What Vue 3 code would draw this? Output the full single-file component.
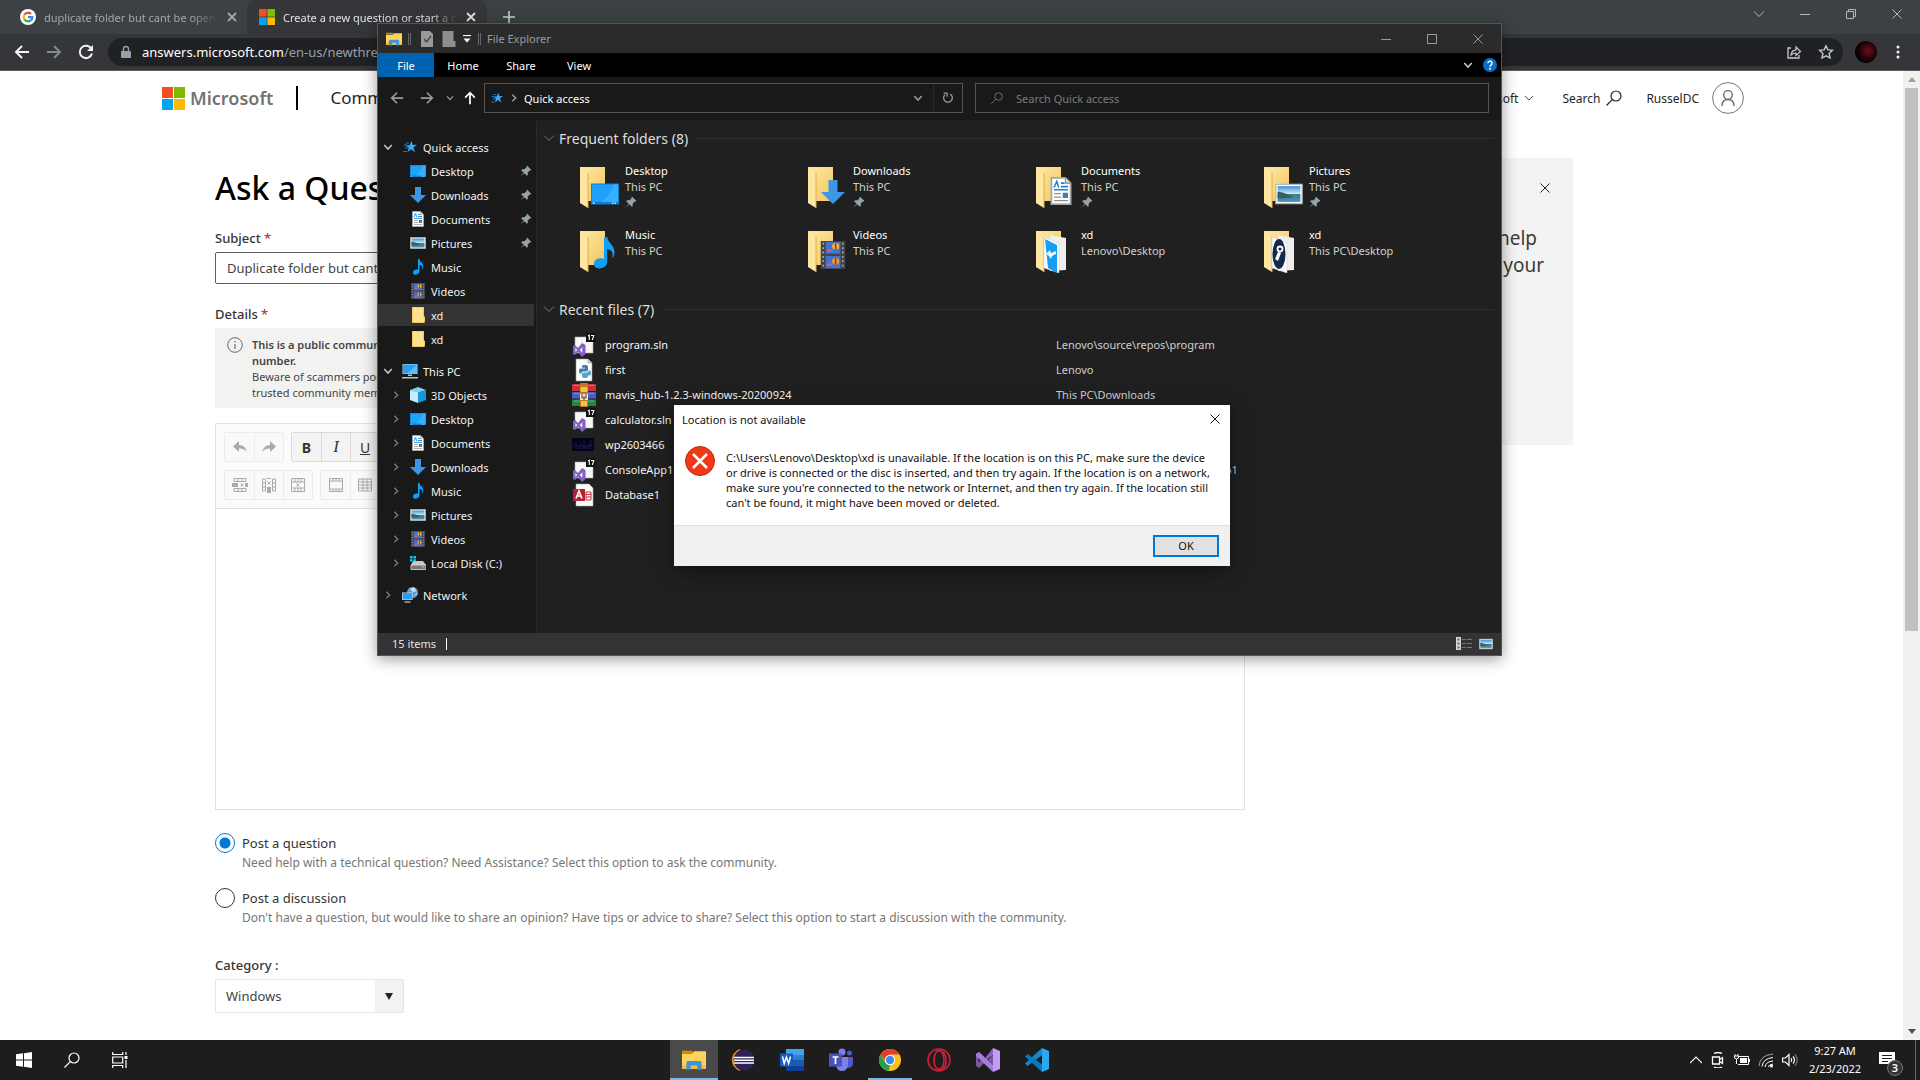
<script setup>
import { ref } from 'vue'

const subject = ref('Duplicate folder but cant be opened')
const postType = ref('question')
const category = ref('Windows')

const quickAccess = [
  { name: 'Desktop', icon: 'desktop', pinned: true },
  { name: 'Downloads', icon: 'download', pinned: true },
  { name: 'Documents', icon: 'document', pinned: true },
  { name: 'Pictures', icon: 'picture', pinned: true },
  { name: 'Music', icon: 'music' },
  { name: 'Videos', icon: 'video' },
  { name: 'xd', icon: 'folder', selected: true },
  { name: 'xd', icon: 'folder' }
]

const thisPc = [
  { name: '3D Objects', icon: 'cube' },
  { name: 'Desktop', icon: 'desktop' },
  { name: 'Documents', icon: 'document' },
  { name: 'Downloads', icon: 'download' },
  { name: 'Music', icon: 'music' },
  { name: 'Pictures', icon: 'picture' },
  { name: 'Videos', icon: 'video' },
  { name: 'Local Disk (C:)', icon: 'disk' }
]

const folders = [
  { name: 'Desktop', path: 'This PC', icon: 'desktop', pinned: true },
  { name: 'Downloads', path: 'This PC', icon: 'download', pinned: true },
  { name: 'Documents', path: 'This PC', icon: 'document', pinned: true },
  { name: 'Pictures', path: 'This PC', icon: 'picture', pinned: true },
  { name: 'Music', path: 'This PC', icon: 'music' },
  { name: 'Videos', path: 'This PC', icon: 'video' },
  { name: 'xd', path: 'Lenovo\\Desktop', sheet: 'blue' },
  { name: 'xd', path: 'This PC\\Desktop', sheet: 'navy' }
]

const files = [
  { name: 'program.sln', path: 'Lenovo\\source\\repos\\program', icon: 'sln' },
  { name: 'first', path: 'Lenovo', icon: 'python' },
  { name: 'mavis_hub-1.2.3-windows-20200924', path: 'This PC\\Downloads', icon: 'rar' },
  { name: 'calculator.sln', path: '', icon: 'sln' },
  { name: 'wp2603466', path: '', icon: 'wallpaper' },
  { name: 'ConsoleApp1', path: 'Lenovo\\source\\repos\\ConsoleApp1', icon: 'sln' },
  { name: 'Database1', path: '', icon: 'access' }
]

const apps = [
  { name: 'File Explorer', icon: 'explorer', state: 'active' },
  { name: 'Eclipse', icon: 'eclipse' },
  { name: 'Word', icon: 'word' },
  { name: 'Teams', icon: 'teams' },
  { name: 'Chrome', icon: 'chrome', state: 'open' },
  { name: 'Opera', icon: 'opera' },
  { name: 'Visual Studio', icon: 'vs' },
  { name: 'Visual Studio Code', icon: 'vscode' }
]
</script>

<template>
  <div class="screen">
    <svg class="sprite" aria-hidden="true">
      <defs>
        <linearGradient id="gold" x1="0" y1="0" x2="1" y2="1">
          <stop offset="0" stop-color="#ffe9a6" /><stop offset="1" stop-color="#f0c75e" />
        </linearGradient>
        <linearGradient id="sky" x1="0" y1="0" x2="0" y2="1">
          <stop offset="0" stop-color="#3f8fd6" /><stop offset=".5" stop-color="#d5eefb" /><stop offset=".52" stop-color="#3f7f7c" /><stop offset="1" stop-color="#4d8fbd" />
        </linearGradient>
      </defs>
      <symbol id="close" viewBox="0 0 12 12"><path d="M1.5 1.5l9 9M10.500 1.500l-9 9" fill="none" stroke="currentColor" /></symbol>
      <symbol id="close-bold" viewBox="0 0 12 12"><path d="M2 2l8 8M10 2l-8 8" fill="none" stroke="currentColor" stroke-width="1.800" /></symbol>
      <symbol id="plus" viewBox="0 0 12 12"><path d="M6 0v12M0 6h12" fill="none" stroke="currentColor" stroke-width="1.600" /></symbol>
      <symbol id="minimize" viewBox="0 0 12 12"><path d="M1 6.500h10" stroke="currentColor" /></symbol>
      <symbol id="maximize" viewBox="0 0 12 12"><path d="M1.500 1.500h9v9h-9z" fill="none" stroke="currentColor" /></symbol>
      <symbol id="restore" viewBox="0 0 12 12"><path d="M1.500 3.500h7v7h-7zM3.500 3V1.500h7v7H9" fill="none" stroke="currentColor" /></symbol>
      <symbol id="chev-down" viewBox="0 0 12 12"><path d="M1.500 3.500L6 8.500l4.500-5" fill="none" stroke="currentColor" stroke-width="1.800" /></symbol>
      <symbol id="chev-thin" viewBox="0 0 12 12"><path d="M1 3.500l5 5 5-5" fill="none" stroke="currentColor" /></symbol>
      <symbol id="chev-up" viewBox="0 0 12 12"><path d="M0 9l6-6 6 6" fill="none" stroke="currentColor" stroke-width="1.200" /></symbol>
      <symbol id="chev-right" viewBox="0 0 12 12"><path d="M4 2l4 4-4 4" fill="none" stroke="currentColor" stroke-width="1.800" /></symbol>
      <symbol id="arrow-left" viewBox="0 0 16 16"><path d="M15 8H2M8 2L2 8l6 6" fill="none" stroke="currentColor" stroke-width="2" /></symbol>
      <symbol id="arrow-right" viewBox="0 0 16 16"><path d="M1 8h13M8 2l6 6-6 6" fill="none" stroke="currentColor" stroke-width="2" /></symbol>
      <symbol id="arrow-up" viewBox="0 0 16 16"><path d="M8 15V2M2.500 7.500L8 2l5.500 5.500" fill="none" stroke="currentColor" stroke-width="2" /></symbol>
      <symbol id="reload" viewBox="0 0 16 16"><path d="M13.500 5A6.200 6.200 0 1 0 14 9.500" fill="none" stroke="currentColor" stroke-width="2" /><path d="M15 1v6H9z" fill="currentColor" /></symbol>
      <symbol id="refresh" viewBox="0 0 16 16"><path d="M10.500 3.500A5 5 0 1 1 4.500 4.200M3 2.500h4v4" fill="none" stroke="currentColor" stroke-width="1.500" /></symbol>
      <symbol id="lock" viewBox="0 0 12 14"><path d="M2 6h8a1 1 0 0 1 1 1v5a1 1 0 0 1-1 1H2a1 1 0 0 1-1-1V7a1 1 0 0 1 1-1z" fill="currentColor" /><path d="M3.500 6V4a2.500 2.500 0 0 1 5 0v2" fill="none" stroke="currentColor" stroke-width="1.400" /></symbol>
      <symbol id="share" viewBox="0 0 16 16"><path d="M5 4H2v10h11v-3" fill="none" stroke="currentColor" stroke-width="1.300" /><path d="M5 11c.5-3.500 2.500-5 5-5.200V3l4.500 4.500L10 11.500V9C8 9 6.500 9.500 5 11z" fill="none" stroke="currentColor" stroke-width="1.200" /></symbol>
      <symbol id="star-line" viewBox="0 0 16 16"><path d="M8 1.800l1.900 4.100 4.500.5-3.300 3.100.9 4.500L8 11.800 4 14l.9-4.500L1.600 6.400l4.500-.5z" fill="none" stroke="currentColor" stroke-width="1.400" /></symbol>
      <symbol id="dots" viewBox="0 0 4 16"><circle cx="2" cy="3" r="1.500" fill="currentColor" /><circle cx="2" cy="8" r="1.500" fill="currentColor" /><circle cx="2" cy="13" r="1.500" fill="currentColor" /></symbol>
      <symbol id="magnifier" viewBox="0 0 16 16"><circle cx="10" cy="6" r="5" fill="none" stroke="currentColor" stroke-width="1.200" /><path d="M6.300 9.700L.5 15.500" stroke="currentColor" stroke-width="1.200" /></symbol>
      <symbol id="google" viewBox="0 0 16 16"><circle cx="8" cy="8" r="8" fill="#fff" /><g fill="none" stroke-width="2.200"><path d="M4.400 5.700A4.300 4.300 0 0 1 11 4.900" stroke="#ea4335" /><path d="M4.400 5.700a4.300 4.300 0 0 0 0 4.600" stroke="#fbbc05" /><path d="M4.400 10.300a4.300 4.300 0 0 0 6.200 1.200" stroke="#34a853" /><path d="M8 8.200h4.300a4.300 4.300 0 0 1-1.700 3.300" stroke="#4285f4" /></g></symbol>
      <symbol id="mslogo" viewBox="0 0 23 23"><path fill="#f25022" d="M0 0h11v11H0z" /><path fill="#7fba00" d="M12 0h11v11H12z" /><path fill="#00a4ef" d="M0 12h11v11H0z" /><path fill="#ffb900" d="M12 12h11v11H12z" /></symbol>
      <symbol id="person" viewBox="0 0 32 32"><circle cx="16" cy="16" r="15.400" fill="#fff" stroke="#777" /><circle cx="16" cy="13" r="4.300" fill="none" stroke="#666" stroke-width="1.300" /><path d="M10 24c0-4 2-6.500 6-6.500s6 2.500 6 6.500" fill="none" stroke="#666" stroke-width="1.300" /></symbol>
      <symbol id="explorer" viewBox="0 0 22 20"><path d="M0 1.500h9l2 2H0z" fill="#d88c00" /><path d="M0 4h9.500l1.500-2h11v16H0z" fill="#ffd35c" /><path d="M0 15h22v3H0z" fill="#f5bd3b" /><path d="M4 19v-6.500q0-1.500 1.500-1.500h11q1.500 0 1.500 1.500V19h-4v-4H8v4z" fill="#3f93dc" /></symbol>
      <symbol id="doc-check" viewBox="0 0 12 16"><path d="M0 0h9l3 3v13H0z" fill="#9a9a9a" /><path d="M3 8l2.500 3L10 5" fill="none" stroke="#444" stroke-width="1.300" /></symbol>
      <symbol id="doc-blank" viewBox="0 0 13 16"><path d="M0 0h11v10h2v6H0z" fill="#8f8e8b" /></symbol>
      <symbol id="qat" viewBox="0 0 8 8"><path d="M0 .5h8" stroke="#fff" stroke-width="1.200" /><path d="M.5 3.500h7L4 7.500z" fill="#fff" /></symbol>
      <symbol id="help" viewBox="0 0 16 16"><circle cx="8" cy="8" r="8" fill="#0a6fc9" /><path d="M5.600 6a2.400 2.300 0 1 1 3.500 2C8.200 8.500 8 9 8 9.900" fill="none" stroke="#fff" stroke-width="1.600" /><circle cx="8" cy="12.200" r="1.100" fill="#fff" /></symbol>
      <symbol id="qstar" viewBox="0 0 16 16"><path d="M9.500 2l1.300 4 4.200-.2-3.600 2.600 1.500 4.900-3.700-3-3.700 2.800 1.300-4.400-3.200-2.300 4.100-.2z" fill="#38a9ff" /><path d="M4 4h3M2 6.200h3M3 9h3M1 12.500h4" stroke="#1378cc" stroke-width="1.200" /></symbol>
      <symbol id="desktop" viewBox="0 0 16 16"><path d="M0 2h16v12H0z" fill="#0f7fd8" /><path d="M.6 2.600h14.800v9.900H.6z" fill="#1ea2fb" /><path d="M6 12.500c3-2 6-6 7-9.900h2.400v9.900z" fill="#36b0ff" /><path d="M1 13.200h1M12 13.200h.8M13.400 13.200h.8" stroke="#fff" stroke-width=".7" /></symbol>
      <symbol id="download" viewBox="0 0 16 16"><path d="M5 0h6v8h5l-8 8-8-8h5z" fill="#3d95e5" /></symbol>
      <symbol id="document" viewBox="0 0 16 16"><path d="M2.500.5h8l3 3v12h-11z" fill="#fff" stroke="#a5a5a5" /><path d="M10.500.5v3h3" fill="#ddd" stroke="#888" stroke-width=".6" /><path d="M4 6l1.600-3.500L6.700 6M8 3.500h2M8 5.500h4M4 7.300h8" fill="none" stroke="#1585d8" stroke-width=".9" /><path d="M4 9.500h4M4 11.500h4M4 13.500h8" stroke="#8f8f8f" stroke-width=".7" /><path d="M9 9h3v3H9z" fill="#3b7fb3" /></symbol>
      <symbol id="picture" viewBox="0 0 16 16"><path d="M.5 2.500h15v11H.5z" fill="#fff" stroke="#b9b9b9" stroke-width=".7" /><path d="M1.500 3.500h13v9h-13z" fill="url(#sky)" /><path d="M1.500 6.500c4 .8 7 1.700 9 3.500l-9 .6z" fill="#37615c" /></symbol>
      <symbol id="music" viewBox="0 0 16 16"><path d="M8 0h1.600c.3 3.500 5 4.500 3.300 9.500-.2.700-.6 1-.8.800C13 7 11 6.300 9.600 6v6.500C9.600 16 3 17.200 3 13.400c0-2.400 3-3.400 5-2.400z" fill="#0ea0f8" /></symbol>
      <symbol id="video" viewBox="0 0 16 16"><path d="M1 0h14v16H1z" fill="#454545" /><path d="M3.800.5h8.400v6.800H3.800zM3.800 8.500h8.400v7H3.800z" fill="#3f74cf" /><circle cx="9.500" cy="3" r="2" fill="#f3b62c" /><circle cx="9.500" cy="11.500" r="2" fill="#e5a02b" /><path d="M9.500 1v4M9.500 9.500v4" stroke="#ba2731" stroke-width=".9" /><path d="M4 6q2-3 4 0zM4 14q2-3 4 0z" fill="#da5a86" /><path d="M2.400 1v15M13.600 1v15" stroke="#bbb" stroke-width=".8" stroke-dasharray="1 1.500" /></symbol>
      <symbol id="folder" viewBox="0 0 16 16"><path d="M2 0h12v9.500h1V15l-1 1H2z" fill="#e9bd4b" /><path d="M2.600.6h10.800V10h1v4.500l-1 .8H2.600z" fill="#ffe08d" /></symbol>
      <symbol id="pc" viewBox="0 0 16 16"><path d="M.5 1h15v10H.5z" fill="#b9d8ef" /><path d="M1 1.500h14v9H1z" fill="#2a9df4" /><path d="M15 1.500v9H5z" fill="#5bbcff" /><path d="M6 11.500h4v1.500H6zM0 14h16v1.500H0z" fill="#b9c3ca" /></symbol>
      <symbol id="cube" viewBox="0 0 16 16"><path d="M0 3l8-3 8 3-8 3z" fill="#7fd0f2" /><path d="M0 3l8 2.500V16l-8-3z" fill="#c6edf8" /><path d="M16 3L8 5.500V16l8-3z" fill="#1696dd" /></symbol>
      <symbol id="disk" viewBox="0 0 16 16"><path d="M3 6h10l3 4H1z" fill="#c8c8c8" /><path d="M1 10h15v4.500H1z" fill="#777" stroke="#ddd" stroke-width=".8" /><path d="M12 12h2" stroke="#4ddc53" stroke-width="1.300" /><path d="M0 1h2.600v2.400H0zM3.400 1H6v2.400H3.400zM0 4.200h2.600v2.400H0zM3.400 4.200H6v2.400H3.400z" fill="#14c4ee" /></symbol>
      <symbol id="network" viewBox="0 0 16 16"><circle cx="10.500" cy="5.500" r="5.500" fill="#5e9dc9" /><path d="M7 2c3 0 2 3 5 3s2-3 0-4.700M13 9c0-2 1-3 3-3" fill="#b8e4fb" /><path d="M0 5.500h10.500v7.500H0z" fill="#c2e2f7" /><path d="M.6 6h9.300v6.400H.6z" fill="#2a9df4" /><path d="M2.500 15h6" stroke="#b9c3ca" stroke-width="1.300" /></symbol>
      <symbol id="pin" viewBox="0 0 12 12"><path d="M7 .5L11.500 5l-1 .6-.8-.2-2 2.300.1 2.300-1 .8L4.300 8.300.5 11.500 3.700 7.700 1.200 5.200l.9-1 2.300.1 2.200-2-.2-.9z" fill="#94a2ab" /></symbol>
      <symbol id="folder-open" viewBox="0 0 40 42"><path d="M0 0h25v34H0z" fill="url(#gold)" /><path d="M0 0l8 6v35l-8-5z" fill="#ffe7a1" /><path d="M8 6v35" stroke="#dfae45" /></symbol>
      <symbol id="sheet-blue" viewBox="0 0 40 42"><path d="M14 4l16 3v32l-16 1z" fill="#eee" /><path d="M8 6l15 6v30L8 37z" fill="#fafafa" stroke="#ccc" stroke-width=".5" /><path d="M9 8l12 6v28l-9-5z" fill="#169ff2" /><path d="M10 23l4-4 1 3 5-2v3l-4 2-1 3-2-3z" fill="#e9f7ff" /></symbol>
      <symbol id="sheet-navy" viewBox="0 0 40 42"><path d="M14 4l16 3v32l-16 1z" fill="#eee" /><path d="M8 6l15 6v30L8 37z" fill="#fafafa" stroke="#ccc" stroke-width=".5" /><ellipse cx="15" cy="23" rx="6.500" ry="15" fill="#14294e" /><circle cx="16" cy="18" r="3.400" fill="#fff" /><circle cx="16" cy="18" r="1.600" fill="#14294e" /><path d="M14 21l3 1-3 8-3-2z" fill="#fff" /></symbol>
      <symbol id="sln" viewBox="0 0 24 24"><path d="M3 4h18v16H3z" fill="#f7f7f7" stroke="#aaa" stroke-width=".6" /><path d="M14 0h9.500v9H14z" fill="#111" /><path d="M16 3l1.300-.8V7M19 2.500h2.800L20.300 7" fill="none" stroke="#fff" stroke-width="1.100" /><path d="M1 13l2-1 3 3 4-5 3.500 2v9L10 24l-4-5-3 3-2-1zm2.300 2v4l2-2zm7-.8L7.800 17l2.500 2.800z" fill="#8661c5" fill-rule="evenodd" /></symbol>
      <symbol id="python" viewBox="0 0 24 24"><path d="M4 1h12l4 4v18H4z" fill="#fdfdfd" stroke="#999" stroke-width=".6" /><path d="M16 1v4h4" fill="#d5d5d5" stroke="#888" stroke-width=".5" /><path d="M11 7h3q2 0 2 2v3q0 1.500-2 1.500h-3q-1.500 0-1.500 2H8q-1-.5-1-2.500t1-2.500h5v-.7h-3V9q0-2 1-2z" fill="#3f7fae" /><path d="M14 20h-2q-2 0-2-2v-2q0-1.500 2-1.500h3q1.500 0 1.500-2H18q1 .5 1 2.500t-1 2.500h-2v.7Q16 20 14 20z" fill="#55a3cc" /></symbol>
      <symbol id="rar" viewBox="0 0 24 24"><path d="M0 1h24v7H0z" fill="#c5353b" /><path d="M0 9h24v6.500H0z" fill="#4a5fc0" /><path d="M0 16.500h24V23H0z" fill="#23864a" /><path d="M2 2.500h20M2 10.500h20M2 18h20" stroke="#fff" stroke-opacity=".3" /><path d="M8 0h8v24H8z" fill="#c9771f" /><path d="M8.500 4h7v5h-7zM9 18h6v5H9z" fill="#f1c445" /><path d="M8 11h8v6H8z" fill="#f4efe2" /><path d="M10 11v4h4v-4M12 13v4" fill="none" stroke="#79522c" stroke-width="1.200" /></symbol>
      <symbol id="wallpaper" viewBox="0 0 24 24"><path d="M0 5h22v13H0z" fill="#03031c" /><path d="M1 13h20M4 9v4M9 10v3M12 8v6M17 10v3M19 7v6M5 15h13" stroke="#25255f" stroke-width=".8" /></symbol>
      <symbol id="access" viewBox="0 0 24 24"><path d="M4 1h13l4 4v18H4z" fill="#fdfdfd" stroke="#aaa" stroke-width=".6" /><path d="M14 9h5v8h-5zM14 11.500h5M14 14h5" fill="none" stroke="#bc2f3a" /><path d="M1 6h12v12H1z" fill="#b7202f" /><path d="M4 15.500l3-7.500 3 7.500M5 13h4" fill="none" stroke="#fff" stroke-width="1.600" /></symbol>
      <symbol id="eclipse" viewBox="0 0 24 24"><path d="M9 1.500A11 11 0 0 0 9 22.500 12 12 0 0 1 9 1.500z" fill="#f7941e" stroke="#f7941e" /><circle cx="13" cy="12" r="10.500" fill="#2c2255" /><path d="M3 9.500h20M3 12.200h20M3 15h20" stroke="#fff" stroke-width="1.400" /></symbol>
      <symbol id="word" viewBox="0 0 24 24"><path d="M6 1h18v6H6z" fill="#41a5ee" /><path d="M6 7h18v5.500H6z" fill="#2b7cd3" /><path d="M6 12.500h18V18H6z" fill="#185abd" /><path d="M6 18h18v5H6z" fill="#103f91" /><path d="M0 5.500h13v13H0z" fill="#185abd" /><path d="M2.500 8.500l1.700 7 2.200-6.500 2.200 6.500 1.900-7" fill="none" stroke="#fff" stroke-width="1.500" /></symbol>
      <symbol id="teams" viewBox="0 0 24 24"><circle cx="13" cy="4" r="3.500" fill="#7b83eb" /><circle cx="20.500" cy="5" r="2.500" fill="#5059c9" /><path d="M16 9h8v7q-1 4-5 4h-3z" fill="#5059c9" /><path d="M7 9h12v8q-1 6-6 6t-6-6z" fill="#7b83eb" /><path d="M0 5.500h13v13H0z" fill="#4b53bc" /><path d="M3.500 9h6M6.500 9v7" stroke="#fff" stroke-width="1.700" /></symbol>
      <symbol id="chrome" viewBox="0 0 24 24"><circle cx="12" cy="12" r="11" fill="#fbc116" /><path d="M2.500 6.500A11 11 0 0 1 21.500 6.500H12L8 14z" fill="#e33b2e" /><path d="M2.500 6.500l5 8.300L12 17l-1.500 6A11 11 0 0 1 2.500 6.500z" fill="#2a9d4e" /><circle cx="12" cy="12" r="5.200" fill="#fff" /><circle cx="12" cy="12" r="4.200" fill="#4688f1" /></symbol>
      <symbol id="opera" viewBox="0 0 24 24"><g fill="none" stroke="#cf1f3b" stroke-width="1.600"><circle cx="12" cy="12" r="11" /><ellipse cx="12" cy="12" rx="5" ry="9.500" /><path d="M10 2.800q8.500-1.300 9 9.200t-9 9.200" /></g></symbol>
      <symbol id="vs" viewBox="0 0 24 24"><path d="M0 6l3-2 14 13V7L3 20l-3-2 0-12zm2.500 3.500v5L5 12z" fill="#77599f" fill-rule="evenodd" /><path d="M10 12l7-5v-7l-7 9z" fill="#8a63c7" /><path d="M3 4l14 13v7L0 8V6z" fill="#a87ade" /><path d="M17 0l7 3v18l-7 3z" fill="#c49af4" /></symbol>
      <symbol id="vscode" viewBox="0 0 24 24"><path d="M17 0L0 15.500 2.500 18 18 6.500z" fill="#1488cf" /><path d="M2.500 6L0 8.500 17 24l1-7z" fill="#0b77bd" /><path d="M17 0l7 3v18l-7 3z" fill="#2ba8ee" /></symbol>
      <symbol id="windows" viewBox="0 0 16 16"><path d="M0 2.300L7 1.300v6.200H0zM8 1.200L16 0v7.500H8zM0 8.500h7v6.200l-7-1zM8 8.500h8V16l-8-1.200z" fill="#fff" /></symbol>
      <symbol id="taskview" viewBox="0 0 16 16"><path d="M.7 0v2.500h10V0M.7 16v-2.500h10V16M.7 5h10v6H.7zM14 0v3M14 8v8" fill="none" stroke="#fff" stroke-width="1.200" /><path d="M12.500 4h3v3h-3z" fill="#fff" /></symbol>
      <symbol id="meet" viewBox="0 0 16 16"><path d="M2.500 5h7v7h-7zM9.500 7.500l3-1.800v5.600l-3-1.800M4 1.500q4-2 8 0M4 15q4 2 8 0" fill="none" stroke="#fff" stroke-width="1.300" /></symbol>
      <symbol id="battery" viewBox="0 0 16 16"><path d="M5 4.500h9.500v8H4" fill="none" stroke="#fff" /><path d="M6 6h7v5H6zM15 7h1v3h-1z" fill="#fff" /><path d="M2.500 12V7M.5 4h4v2q-2 2-4 0zM1 4V2M4 4V2" fill="none" stroke="#fff" /></symbol>
      <symbol id="wifi" viewBox="0 0 16 16"><g fill="none" stroke="#fff"><path d="M1 14Q2 3 15 2" stroke-opacity=".6" /><path d="M4 14.500Q5 6.500 15 5.500M7 15q1-5.500 8-6M10 15q1-2.500 5-3" /></g><circle cx="13.500" cy="14" r="1.500" fill="#fff" /></symbol>
      <symbol id="sound" viewBox="0 0 16 16"><path d="M.6 6h2.900L7 2.500v11L3.500 10H.6z" fill="none" stroke="#fff" stroke-width="1.200" /><path d="M9 6q1.500 2 0 4M11 4.500q3 3.500 0 7" fill="none" stroke="#fff" stroke-width="1.200" /><path d="M13 2.500q4.500 5.500 0 11" fill="none" stroke="#777" stroke-width="1.200" /></symbol>
      <symbol id="undo" viewBox="0 0 16 16"><path d="M7 2v4q6 0 8 7-3-4-8-3.500V13L1 7.500z" fill="#aaa" /></symbol>
      <symbol id="redo" viewBox="0 0 16 16"><path d="M9 2v4q-6 0-8 7 3-4 8-3.500V13l6-5.500z" fill="#aaa" /></symbol>
      <symbol id="row-del" viewBox="0 0 16 16"><path d="M2 1.500h12v3H2zM6 1.500v3M10 1.500v3M2 11.500h12v3H2zM6 11.500v3M10 11.500v3M8.500 6.500l3 3M11.500 6.500l-3 3" fill="none" stroke="#aaa" /><path d="M0 6h6v4H0zM13 6h3v4h-3z" fill="#aaa" /></symbol>
      <symbol id="col-del" viewBox="0 0 16 16"><path d="M1.500 2h3v12h-3zM1.500 6h3M1.500 10h3M11.500 2h3v12h-3zM11.500 6h3M11.500 10h3M6.500 4.500l3 3M9.500 4.500l-3 3M6 1.500h4" fill="none" stroke="#aaa" /><path d="M6 10h4v6H6z" fill="#aaa" /></symbol>
      <symbol id="tbl-del" viewBox="0 0 16 16"><path d="M1.500 1.500h13v13h-13zM1.500 5h13M1.500 11h13M5 1.500V5M8 1.500V5M11 1.500V5M5 11v3.500M8 11v3.500M11 11v3.500M6.500 6.500l3 3M9.500 6.500l-3 3" fill="none" stroke="#aaa" /></symbol>
      <symbol id="tbl-head" viewBox="0 0 16 16"><path d="M1.500 1.500h13v13h-13zM1.500 4h13M1.500 12h13M5 1.500V4M8 1.500V4M11 1.500V4M5 12v2.500M8 12v2.500M11 12v2.500" fill="none" stroke="#aaa" /></symbol>
      <symbol id="tbl" viewBox="0 0 16 16"><path d="M1.500 2h13v12h-13zM1.500 5h13M1.500 8h13M1.500 11h13M6 2v12M10 2v12" fill="none" stroke="#aaa" /></symbol>
      <symbol id="info" viewBox="0 0 16 16"><circle cx="8" cy="8" r="7.300" fill="none" stroke="#5e6b78" /><path d="M8 7v5" stroke="#5e6b78" stroke-width="1.200" /><circle cx="8" cy="4.700" r=".8" fill="#5e6b78" /></symbol>
      <symbol id="error" viewBox="0 0 30 30"><circle cx="15" cy="15" r="14.500" fill="#f03a17" stroke="#c32a10" /><path d="M8 8l14 14M22 8L8 22" stroke="#fff" stroke-width="2.500" /></symbol>
      <symbol id="details-view" viewBox="0 0 16 14"><path d="M0 0h5v13H0z" fill="#d8d8d8" /><path d="M1.500 1.500h2v2h-2zM1.500 5.500h2v2h-2zM1.500 9.500h2v2h-2z" fill="#567" /><path d="M6 2.500h4M11 2.500h5M6 6.500h4M11 6.500h5M6 10.500h4M11 10.500h5" stroke="#777" /></symbol>
      <symbol id="notify" viewBox="0 0 16 16"><path d="M0 0h16v12h-3v4l-4-4H0z" fill="#fff" /><path d="M3 3.500h10M3 6.500h10M3 9.500h6" stroke="#1d1d1d" /></symbol>
    </svg>

    <div class="browser">
      <div class="tabstrip">
        <div class="tab">
          <svg class="i16"><use href="#google" /></svg>
          <span class="tab-title">duplicate folder but cant be opened</span>
          <button class="bare" aria-label="Close tab"><svg class="i12"><use href="#close-bold" /></svg></button>
        </div>
        <div class="tab current">
          <svg class="i16"><use href="#mslogo" /></svg>
          <span class="tab-title">Create a new question or start a discussion</span>
          <button class="bare" aria-label="Close tab"><svg class="i12"><use href="#close-bold" /></svg></button>
        </div>
        <button class="bare new-tab" aria-label="New tab"><svg class="i12"><use href="#plus" /></svg></button>
        <div class="win-controls">
          <button class="bare" aria-label="Search tabs"><svg class="i12"><use href="#chev-thin" /></svg></button>
          <button class="bare" aria-label="Minimize"><svg class="i12"><use href="#minimize" /></svg></button>
          <button class="bare" aria-label="Restore"><svg class="i12"><use href="#restore" /></svg></button>
          <button class="bare" aria-label="Close"><svg class="i12"><use href="#close" /></svg></button>
        </div>
      </div>
      <div class="toolbar">
        <button class="bare nav-btn" aria-label="Back"><svg class="i16"><use href="#arrow-left" /></svg></button>
        <button class="bare nav-btn dim" aria-label="Forward"><svg class="i16"><use href="#arrow-right" /></svg></button>
        <button class="bare nav-btn" aria-label="Reload"><svg class="i16"><use href="#reload" /></svg></button>
        <div class="omnibox">
          <svg class="i14"><use href="#lock" /></svg>
          <span class="url">answers.microsoft.com<span class="path">/en-us/newthread</span></span>
          <button class="bare" aria-label="Share"><svg class="i16"><use href="#share" /></svg></button>
          <button class="bare" aria-label="Bookmark"><svg class="i16"><use href="#star-line" /></svg></button>
        </div>
        <button class="bare avatar" aria-label="Profile"></button>
        <button class="bare menu" aria-label="Menu"><svg class="i16"><use href="#dots" /></svg></button>
      </div>

      <div class="viewport">
        <div class="page">
          <header class="site-header">
            <svg class="i23"><use href="#mslogo" /></svg>
            <a class="brand" href="#">Microsoft</a>
            <a class="community" href="#">Community</a>
            <nav class="account">
              <a class="all" href="#">All Microsoft <svg class="i10"><use href="#chev-thin" /></svg></a>
              <a class="search" href="#">Search <svg class="i16"><use href="#magnifier" /></svg></a>
              <a class="user" href="#">RusselDC <svg class="i32"><use href="#person" /></svg></a>
            </nav>
          </header>

          <div class="columns">
            <form class="question" @submit.prevent>
              <h1>Ask a Question</h1>
              <label class="field-label" for="subject">Subject <i>*</i></label>
              <input id="subject" v-model="subject" class="subject" type="text" />
              <label class="field-label" for="details">Details <i>*</i></label>
              <div class="notice">
                <svg class="i16"><use href="#info" /></svg>
                <p>
                  <b>This is a public community!<br />number.</b><br />
                  Beware of scammers posting<br />
                  trusted community member.
                </p>
              </div>
              <div class="editor">
                <div class="editor-tools">
                  <div class="tool-row">
                    <div class="group off"><button aria-label="Undo"><svg class="i16"><use href="#undo" /></svg></button><button aria-label="Redo"><svg class="i16"><use href="#redo" /></svg></button></div>
                    <div class="group"><button><b>B</b></button><button><em>I</em></button><button><u>U</u></button></div>
                  </div>
                  <div class="tool-row">
                    <div class="group off"><button aria-label="Delete row"><svg class="i16"><use href="#row-del" /></svg></button><button aria-label="Delete column"><svg class="i16"><use href="#col-del" /></svg></button><button aria-label="Delete table"><svg class="i16"><use href="#tbl-del" /></svg></button></div>
                    <div class="group off"><button aria-label="Header row"><svg class="i16"><use href="#tbl-head" /></svg></button><button aria-label="Table"><svg class="i16"><use href="#tbl" /></svg></button></div>
                  </div>
                </div>
                <textarea id="details"></textarea>
              </div>
              <label class="choice">
                <input v-model="postType" type="radio" value="question" />
                <span>Post a question<small>Need help with a technical question? Need Assistance? Select this option to ask the community.</small></span>
              </label>
              <label class="choice">
                <input v-model="postType" type="radio" value="discussion" />
                <span>Post a discussion<small>Don't have a question, but would like to share an opinion? Have tips or advice to share? Select this option to start a discussion with the community.</small></span>
              </label>
              <label class="field-label category" for="category">Category :</label>
              <div class="select">
                <select id="category" v-model="category"><option>Windows</option></select>
                <span class="select-arrow"></span>
              </div>
            </form>
            <aside class="tips">
              <button class="bare" aria-label="Close"><svg class="i12"><use href="#close" /></svg></button>
              <p><span>help</span><span>your</span></p>
            </aside>
          </div>
        </div>
        <div class="scrollbar"><span class="tri"></span><span class="thumb"></span><span class="tri down"></span></div>
      </div>
    </div>

    <section class="explorer">
      <div class="ex-title">
        <svg class="i16"><use href="#explorer" /></svg>
        <span class="sep"></span>
        <svg class="i16"><use href="#doc-check" /></svg>
        <svg class="i16"><use href="#doc-blank" /></svg>
        <svg class="i8"><use href="#qat" /></svg>
        <span class="sep last"></span>
        <span>File Explorer</span>
        <div class="win-controls">
          <button class="bare" aria-label="Minimize"><svg class="i12"><use href="#minimize" /></svg></button>
          <button class="bare" aria-label="Maximize"><svg class="i12"><use href="#maximize" /></svg></button>
          <button class="bare" aria-label="Close"><svg class="i12"><use href="#close" /></svg></button>
        </div>
      </div>
      <div class="ribbon">
        <button class="bare file">File</button>
        <button class="bare">Home</button>
        <button class="bare">Share</button>
        <button class="bare">View</button>
        <div class="ribbon-end"><svg class="i10"><use href="#chev-down" /></svg><svg class="i14"><use href="#help" /></svg></div>
      </div>
      <div class="address-row">
        <button class="bare" aria-label="Back"><svg class="i14"><use href="#arrow-left" /></svg></button>
        <button class="bare fwd" aria-label="Forward"><svg class="i14"><use href="#arrow-right" /></svg></button>
        <button class="bare hist" aria-label="Recent locations"><svg class="i8"><use href="#chev-down" /></svg></button>
        <button class="bare up" aria-label="Up"><svg class="i14"><use href="#arrow-up" /></svg></button>
        <div class="address">
          <svg class="i14"><use href="#qstar" /></svg>
          <svg class="i10 crumb"><use href="#chev-right" /></svg>
          <span>Quick access</span>
          <svg class="i10 drop"><use href="#chev-down" /></svg>
          <button class="bare refresh" aria-label="Refresh"><svg class="i14"><use href="#refresh" /></svg></button>
        </div>
        <label class="ex-search">
          <svg class="i12"><use href="#magnifier" /></svg>
          <input type="search" placeholder="Search Quick access" aria-label="Search Quick access" />
        </label>
      </div>
      <div class="ex-body">
        <nav class="tree">
          <div class="node root"><svg class="i10 open"><use href="#chev-down" /></svg><svg class="i16"><use href="#qstar" /></svg><span>Quick access</span></div>
          <div v-for="(n, i) in quickAccess" :key="'q' + i" class="node" :class="{ selected: n.selected }">
            <span class="gap"></span><svg class="i16"><use :href="'#' + n.icon" /></svg><span>{{ n.name }}</span>
            <svg v-if="n.pinned" class="i12 pin"><use href="#pin" /></svg>
          </div>
          <div class="node root spaced"><svg class="i10 open"><use href="#chev-down" /></svg><svg class="i16"><use href="#pc" /></svg><span>This PC</span></div>
          <div v-for="n in thisPc" :key="n.name" class="node">
            <svg class="i10"><use href="#chev-right" /></svg><svg class="i16"><use :href="'#' + n.icon" /></svg><span>{{ n.name }}</span>
          </div>
          <div class="node root spaced"><svg class="i10"><use href="#chev-right" /></svg><svg class="i16"><use href="#network" /></svg><span>Network</span></div>
        </nav>
        <div class="content">
          <h2><svg class="i12"><use href="#chev-thin" /></svg>Frequent folders (8)</h2>
          <ul class="tiles">
            <li v-for="(f, i) in folders" :key="'f' + i">
              <span class="thumbnail">
                <svg class="base"><use href="#folder-open" /></svg>
                <svg v-if="f.sheet" class="base"><use :href="'#sheet-' + f.sheet" /></svg>
                <svg v-else class="badge" :class="f.icon"><use :href="'#' + f.icon" /></svg>
              </span>
              <span class="tile-text"><b>{{ f.name }}</b><span>{{ f.path }}</span><svg v-if="f.pinned" class="i12"><use href="#pin" /></svg></span>
            </li>
          </ul>
          <h2 class="recent"><svg class="i12"><use href="#chev-thin" /></svg>Recent files (7)</h2>
          <table class="files">
            <tbody>
              <tr v-for="f in files" :key="f.name">
                <td class="c-icon"><svg class="i24"><use :href="'#' + f.icon" /></svg></td>
                <td class="c-name">{{ f.name }}</td>
                <td class="c-path">{{ f.path }}</td>
              </tr>
            </tbody>
          </table>
        </div>
      </div>
      <div class="status"><span class="count">15 items</span><svg class="i16"><use href="#details-view" /></svg><svg class="i14"><use href="#picture" /></svg></div>
    </section>

    <section class="dialog" role="dialog" aria-labelledby="dlg-title">
      <div class="dlg-title"><span id="dlg-title">Location is not available</span><button class="bare" aria-label="Close"><svg class="i12"><use href="#close" /></svg></button></div>
      <div class="dlg-body">
        <svg class="i30"><use href="#error" /></svg>
        <p>C:\Users\Lenovo\Desktop\xd is unavailable. If the location is on this PC, make sure the device<br />or drive is connected or the disc is inserted, and then try again. If the location is on a network,<br />make sure you're connected to the network or Internet, and then try again. If the location still<br />can't be found, it might have been moved or deleted.</p>
      </div>
      <div class="dlg-foot"><button class="ok">OK</button></div>
    </section>

    <footer class="taskbar">
      <div class="start">
        <button class="bare" aria-label="Start"><svg class="i16"><use href="#windows" /></svg></button>
        <button class="bare" aria-label="Search"><svg class="i16"><use href="#magnifier" /></svg></button>
        <button class="bare" aria-label="Task view"><svg class="i16"><use href="#taskview" /></svg></button>
      </div>
      <div class="apps">
        <button v-for="a in apps" :key="a.name" class="bare" :class="a.state" :aria-label="a.name"><svg class="i24"><use :href="'#' + a.icon" /></svg></button>
      </div>
      <div class="tray">
        <svg class="i12"><use href="#chev-up" /></svg>
        <svg class="i16"><use href="#meet" /></svg>
        <svg class="i16"><use href="#battery" /></svg>
        <svg class="i16"><use href="#wifi" /></svg>
        <svg class="i16"><use href="#sound" /></svg>
        <div class="clock"><span>9:27 AM</span><span>2/23/2022</span></div>
        <button class="bare notify" aria-label="Notifications"><svg class="i16"><use href="#notify" /></svg><span class="badge-count">3</span></button>
        <span class="peek"></span>
      </div>
    </footer>
  </div>
</template>

<style>
body { margin: 0; }
</style>

<style scoped>
.screen { position: relative; display: flex; flex-direction: column; height: 100vh; overflow: hidden; font-family: "Noto Sans", "Open Sans", sans-serif; font-size: 11px; background: #fff; color: #333; }
.screen * { box-sizing: border-box; }
.sprite { position: absolute; width: 0; height: 0; }
svg { flex: none; display: block; overflow: visible; }
.i8 { width: 8px; height: 8px; }
.i10 { width: 10px; height: 10px; }
.i12 { width: 12px; height: 12px; }
.i14 { width: 14px; height: 14px; }
.i16 { width: 16px; height: 16px; }
.i23 { width: 23px; height: 23px; }
.i24 { width: 24px; height: 24px; }
.i30 { width: 30px; height: 30px; }
.i32 { width: 32px; height: 32px; }
.bare { display: flex; align-items: center; justify-content: center; border: 0; padding: 0; background: none; color: inherit; font: inherit; }
a { color: inherit; text-decoration: none; }

.browser { flex: 1; min-height: 0; display: flex; flex-direction: column; }
.tabstrip { display: flex; align-items: center; height: 34px; background: #3c4144; color: #c9ccd0; }
.tab { display: flex; align-items: center; gap: 8px; width: 247px; height: 34px; padding: 0 9px 0 20px; color: #a2a7ac; }
.tab.current { width: 240px; padding: 0 10px 0 12px; background: #35363a; border-radius: 8px 8px 0 0; color: #dee1e6; }
.tab-title { flex: 1; overflow: hidden; white-space: nowrap; -webkit-mask-image: linear-gradient(90deg, #000 85%, transparent); mask-image: linear-gradient(90deg, #000 85%, transparent); }
.new-tab { width: 44px; height: 34px; }
.win-controls { display: flex; margin-left: auto; }
.win-controls .bare { width: 46px; height: 28px; }
.tabstrip .win-controls { align-self: flex-start; color: #b4b7ba; }
.toolbar { display: flex; align-items: center; height: 37px; padding-left: 6px; border-bottom: 1px solid #5b5d60; background: #35363a; color: #f1f3f4; }
.nav-btn { width: 32px; height: 32px; }
.dim { color: #85888c; }
.omnibox { flex: 1; display: flex; align-items: center; gap: 16px; height: 28px; margin-left: 6px; padding: 0 9px 0 11px; border-radius: 14px; background: #202124; color: #c5c8cb; font-size: 13px; }
.omnibox .i14 { color: #9aa0a6; }
.url { flex: 1; margin-left: -7px; color: #fff; }
.path { color: #9aa0a6; }
.avatar { width: 22px; height: 22px; margin-left: 12px; border-radius: 50%; background: radial-gradient(circle at 60% 45%, #6e0f1c 0, #210308 45%, #050203 70%); }
.menu { width: 22px; margin: 0 11px 0 10px; height: 22px; }

.viewport { flex: 1; min-height: 0; display: flex; }
.page { flex: 1; min-width: 0; overflow: hidden; }
.scrollbar { display: flex; flex-direction: column; align-items: center; width: 17px; background: #f1f1f0; }
.tri { flex: none; height: 17px; display: flex; align-items: center; }
.tri::after { content: ""; border: 4px solid transparent; border-top: 0; border-bottom: 5px solid #a0a0a0; }
.tri.down { margin-top: auto; }
.tri.down::after { border-bottom: 0; border-top: 5px solid #505050; }
.thumb { width: 13px; height: 56%; background: #c1c1c1; }

.site-header { display: flex; align-items: center; height: 54px; padding: 0 159px 0 162px; color: #262626; }
.brand { margin-left: 5px; padding-right: 23px; font-size: 18px; line-height: 24px; font-weight: 600; color: #737373; }
.community { padding-left: 32px; border-left: 2px solid #000; font-size: 17px; line-height: 24px; }
.account { display: flex; align-items: center; margin-left: auto; font-size: 12px; }
.account a { display: flex; align-items: center; gap: 6px; }
.account .all { margin-right: 28px; }
.account .search { margin-right: 24px; }
.account .user { gap: 13px; }

.columns { display: flex; align-items: flex-start; gap: 28px; padding: 0 330px 0 215px; }
.question { flex: 1; min-width: 0; }
h1 { margin: 41px 0 18px; font-size: 32px; line-height: 44px; font-weight: 500; color: #000; }
.field-label { display: block; font-size: 13px; line-height: 20px; font-weight: 500; color: #333; }
.field-label i { color: #a4262c; font-style: normal; font-weight: 400; }
.subject { display: block; width: 100%; height: 32px; margin: 4px 0 20px; padding: 0 11px; border: 1px solid #605e5c; border-radius: 2px; background: #fff; font: 400 13px "Noto Sans", sans-serif; color: #444; }
.notice { display: flex; gap: 9px; height: 80px; margin: 4px 0 15px; padding: 9px 12px 0; background: #f2f2f1; color: #444; overflow: hidden; }
.notice p { margin: 0; line-height: 16px; white-space: nowrap; }
.notice b { font-weight: 600; }
.choice small { font-size: 12px; }
.editor { margin-bottom: 23px; border: 1px solid #e2e2e2; }
.editor-tools { display: flex; flex-direction: column; gap: 8px; padding: 8px; border-bottom: 1px solid #e2e2e2; background: #fbfbfb; }
.tool-row { display: flex; gap: 7px; }
.group { display: flex; border: 1px solid #dadada; border-radius: 2px; }
.group button { display: flex; align-items: center; justify-content: center; width: 29px; height: 28px; padding: 0; border: 0; background: #f3f3f3; font: 400 14px "Noto Sans", sans-serif; color: #333; }
.group button + button { border-left: 1px solid #dadada; }
.group.off { border-color: #ececec; }
.group.off button { background: #f9f9f9; border-color: #ececec; }
.group em { font-family: "Liberation Serif", serif; font-size: 17px; }
textarea { display: block; width: 100%; height: 300px; border: 0; resize: none; }
.choice { display: flex; gap: 7px; margin-bottom: 15px; font-size: 13px; line-height: 20px; color: #333; }
.choice small { display: block; line-height: 20px; color: #767676; }
.choice input { appearance: none; flex: none; width: 20px; height: 20px; margin: 0; border: 1px solid #333; border-radius: 50%; background: #fff; }
.choice input:checked { border-color: #0078d4; background: radial-gradient(circle, #0078d4 0 5px, #fff 6px); }
.category { margin-top: 27px; }
.select { display: flex; width: 189px; height: 34px; margin-top: 4px; border: 1px solid #e5e5e5; border-radius: 2px; }
.select select { appearance: none; flex: 1; border: 0; padding: 0 10px; background: #fff; font: 400 13px "Noto Sans", sans-serif; color: #444; }
.select-arrow { display: flex; align-items: center; justify-content: center; width: 28px; background: #f3f2f1; }
.select-arrow::after { content: ""; border: 4px solid transparent; border-bottom: 0; border-top: 7px solid #222; }
.tips { width: 300px; height: 287px; margin-top: 33px; padding: 24px 22px; background: #f3f3f3; color: #3b3b3b; }
.tips .bare { margin-left: auto; color: #222; }
.tips p { display: flex; flex-direction: column; align-items: flex-end; margin: 31px 0 0; padding-right: 7px; font-size: 19px; line-height: 27px; color: #3b3b3b; }
.tips span:first-child { padding-right: 7px; }

.explorer { position: absolute; left: 377px; top: 23px; width: 1125px; border: 1px solid #555; background: #191919; color: #fff; box-shadow: 0 3px 14px rgba(0, 0, 0, .4); }
.ex-title { display: flex; align-items: center; height: 29px; padding-left: 8px; background: #2b2b2b; color: #9b9b9b; }
.sep { width: 3px; height: 12px; margin: 0 8px 0 6px; border: 1px solid #686868; border-width: 0 1px; }
.sep.last { margin: 0 6px 0 7px; }
.ex-title .i16 + .i16 { margin: 0 6px; }
.ribbon { display: flex; align-items: stretch; height: 24px; background: #000; }
.ribbon .bare { width: 58px; }
.ribbon .file { width: 56px; background: #0063b1; }
.ribbon-end { display: flex; align-items: center; gap: 10px; margin-left: auto; padding-right: 4px; color: #ccc; }
.address-row { display: flex; align-items: center; height: 43px; padding: 6px 12px 7px 12px; color: #9a9a9a; }
.fwd { margin-left: 16px; }
.hist { margin-left: 12px; }
.up { margin: 0 7px 0 9px; color: #fff; }
.address { display: flex; align-items: center; width: 479px; height: 30px; padding-left: 5px; border: 1px solid #535353; }
.crumb { margin: 0 5px 0 5px; }
.address span { flex: 1; color: #fff; }
.drop { margin-right: 10px; }
.refresh { width: 29px; height: 28px; border-left: 1px solid #2b2b2b; }
.ex-search { flex: 1; display: flex; align-items: center; gap: 13px; height: 30px; margin-left: 12px; padding-left: 15px; border: 1px solid #535353; color: #777; }
.ex-search input { flex: 1; border: 0; padding: 0; outline: 0; background: none; color: #fff; font: 400 11px "Noto Sans", sans-serif; }
.ex-search input::placeholder { color: #7c7c7c; opacity: 1; }
.ex-body { display: flex; }
.tree { width: 159px; padding: 16px 2px 25px 0; border-right: 1px solid #2b2b2b; }
.node { display: flex; align-items: center; gap: 5px; height: 22px; margin: 0 0 2px; padding-left: 13px; white-space: nowrap; color: #f2f2f2; }
.node .i10:first-child { margin-right: 4px; color: #777; }
.node.root { padding-left: 5px; }
.node .i10.open { color: #c8c8c8; }
.node.spaced { margin-top: 10px; }
.gap { width: 14px; }
.node .pin { margin: 0 2px 0 auto; }
.selected { background: #333; }
.content { flex: 1; min-width: 0; padding: 6px 7px 0 6px; background: #202020; }
h2 { display: flex; align-items: center; gap: 4px; margin: 0; height: 24px; font-size: 14px; font-weight: 400; color: #dedede; }
h2 svg { color: #777; }
h2::after { content: ""; flex: 1; height: 1px; margin-left: 4px; background: #2f2f2f; }
.tiles { display: grid; grid-template-columns: repeat(4, 228px); grid-auto-rows: 64px; margin: 13px 0 0; padding: 0 0 0 37px; list-style: none; }
.tiles li { display: flex; gap: 5px; }
.thumbnail { position: relative; width: 40px; height: 42px; margin-top: 4px; }
.base { position: absolute; left: 0; top: 0; width: 40px; height: 42px; }
.badge { position: absolute; right: 1px; bottom: 4px; width: 28px; height: 28px; }
.badge.desktop, .badge.picture { bottom: 1px; }
.badge.music { width: 34px; height: 32px; right: -1px; }
.badge.download { width: 24px; right: 3px; bottom: 5px; height: 24px; }
.tile-text { display: flex; flex-direction: column; line-height: 16px; color: #d0d0d0; }
.tile-text b { font-weight: 400; color: #fff; }
.tile-text .i12 { margin-top: 1px; }
.recent { margin-top: 6px; }
.files { border-collapse: collapse; margin: 11px 0 0 29px; white-space: nowrap; color: #f4f4f4; }
.files td { height: 25px; padding: 0; }
.c-icon { width: 33px; }
.c-name { width: 451px; }
.c-path { color: #cfcfcf; }
.status { display: flex; align-items: center; gap: 7px; height: 22px; padding: 0 8px 0 14px; background: #333; color: #e2e2e2; }
.count { margin-right: auto; padding-right: 10px; border-right: 1px solid #fff; line-height: 12px; }

.dialog { position: absolute; left: 674px; top: 405px; width: 556px; background: #fff; color: #111; box-shadow: 0 4px 18px rgba(0, 0, 0, .5); }
.dlg-title { display: flex; align-items: center; justify-content: space-between; height: 28px; padding: 0 9px 0 8px; }
.dlg-body { display: flex; gap: 11px; padding: 13px 8px 14px 11px; }
.dlg-body p { margin: 4px 0 0; line-height: 15px; white-space: nowrap; height: 61px; }
.dlg-foot { display: flex; justify-content: flex-end; padding: 9px 11px; border-top: 1px solid #dfdfdf; background: #f0f0f0; }
.ok { display: flex; align-items: center; justify-content: center; width: 66px; height: 22px; padding: 0 0 1px; border: 2px solid #0078d7; background: #e1e1e1; color: #111; font: 400 11px "Noto Sans", sans-serif; }

.taskbar { position: relative; display: grid; grid-template-columns: 670px auto 1fr; height: 40px; background: #1d1d1d; color: #fff; }
.start, .apps, .tray { display: flex; align-items: stretch; }
.start .bare { width: 48px; }
.apps { gap: 1px; }
.apps .bare { width: 48px; border-bottom: 2px solid transparent; padding-top: 2px; }
.apps .active { background: #4a4a4a; border-color: #76b9ed; }
.apps .open { border-image: linear-gradient(90deg, transparent 4px, #76b9ed 4px 44px, transparent 44px) 2; border-width: 0 0 2px; }
.tray { align-items: center; justify-content: flex-end; gap: 8px; }
.clock { display: flex; flex-direction: column; width: 56px; margin-left: 1px; text-align: center; line-height: 18px; }
.notify { position: relative; width: 32px; height: 40px; margin-right: 4px; }
.badge-count { position: absolute; right: 0; bottom: 4px; width: 16px; height: 16px; border: 1px solid #777; border-radius: 50%; background: #333; font-size: 11px; line-height: 14px; text-align: center; font-weight: 600; }
.peek { width: 5px; height: 40px; border-left: 1px solid #666; }
</style>
